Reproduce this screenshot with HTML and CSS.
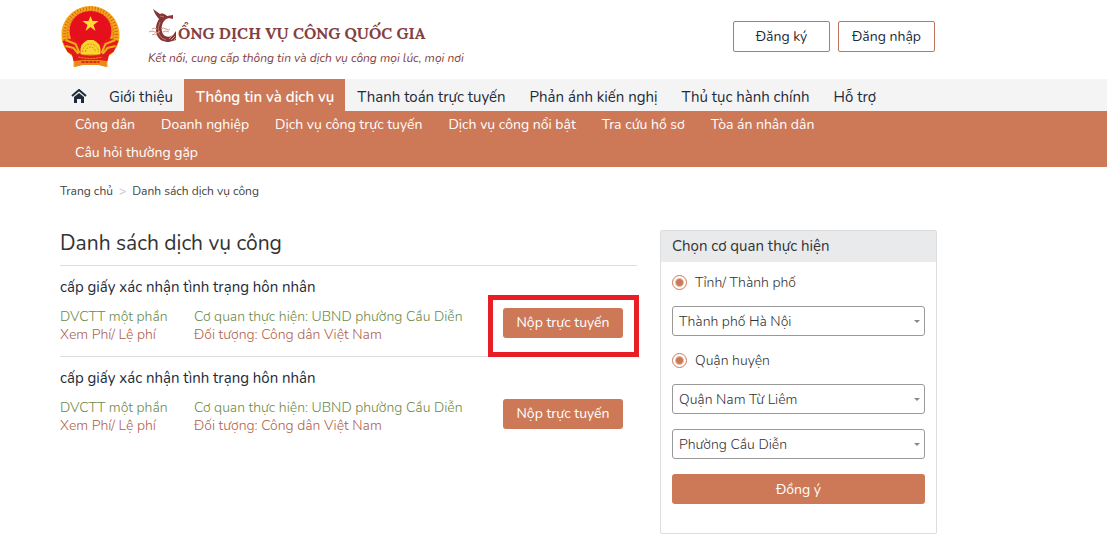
FILE: index.html
```html
<!DOCTYPE html>
<html lang="vi">
<head>
  <meta charset="UTF-8">
  <meta name="viewport" content="width=device-width, initial-scale=1.0">
  <title>Cổng Dịch vụ công Quốc gia</title>
  <link rel="stylesheet" href="styles.css">
</head>
<body>
  <header class="header wrap">
    <a class="brand" href="#" aria-label="Trang chủ">
      <svg class="emblem" viewBox="0 0 60 62" aria-hidden="true">
        <path d="M30 0C45 0 59 12 59 29c0 8-3 14-8 19l-4 3v10l-8-2H21l-8 2V51l-4-3C4 43 1 37 1 29 1 12 15 0 30 0z" fill="#f3a91c"/>
        <circle cx="30" cy="28" r="26" fill="none" stroke="#dd6016" stroke-width="3" stroke-dasharray="1 2"/>
        <circle cx="30" cy="28" r="23" fill="none" stroke="#e67d18" stroke-width="2" stroke-dasharray="2 1"/>
        <ellipse cx="30" cy="25" rx="21" ry="20" fill="#e6101c"/>
        <path d="M30 10l2 5h6l-5 4 2 6-5-4-5 4 2-6-5-4h6z" fill="#ffdf32"/>
        <path d="M2 35l10-3 8 6 3 10-9 2-7-4zM58 35l-10-3-8 6-3 10 9 2 7-4z" fill="#e31b1c"/>
        <path d="M5 34l10 4 4 9M5 40l8 2 5 6M55 34l-10 4-4 9M55 40l-8 2-5 6" fill="none" stroke="#f3a91c" stroke-width="2"/>
        <path d="M20 48v-5l1-4 3-3 3-2h6l3 2 3 3 1 4v5z" fill="#f9d52d"/>
        <path d="M22 46a8 8 0 0 1 16 0M25 46a5 5 0 0 1 10 0" fill="none" stroke="#e78a18" stroke-width="1" stroke-dasharray="2 1"/>
        <path d="M11 47q19 5 38 0l-2 8q-17 4-34 0z" fill="#e01a1d"/>
        <path d="M18 51q12 3 24 0" fill="none" stroke="#f3a423" stroke-width="1" stroke-dasharray="2 1"/>
        <path d="M14 55l7-1h18l7 1v6l-8-2H22l-8 2z" fill="#ef8618"/>
        <path d="M21 56h18" stroke="#d7291b" stroke-width="2" stroke-dasharray="3 1"/>
      </svg>
      <span class="brand-text">
        <span class="brand-name">
          <svg class="bird" viewBox="0 0 30 34" aria-hidden="true">
            <path d="M5 0l7 5c3-1 5 0 7 2l6-1v4c-3-1-6-1-8 1-4 4-4 10-2 14 2 3 6 4 10 1l3-4v9l-7 2c-6 0-10-2-12-7-2-6-1-11 2-16-2-2-4-5-6-10z" fill="#863536"/>
            <path d="M12 7l4 1M12 13q-3 6-1 12 2 5 7 6" fill="none" stroke="#b97868" stroke-width="1"/>
            <path d="M21 30l5-5M23 31l4-4M26 31l2-2" fill="none" stroke="#d2a090" stroke-width="1"/>
            <path d="M4 20q2-2 5 0M1 23q3-2 6 0t5-1M4 26q3-2 5 0M13 20q2-2 5 0t4 0M15 23q2-2 6 0" fill="none" stroke="#d39a88" stroke-width="1"/>
          </svg>
          <span>ỔNG DỊCH VỤ CÔNG QUỐC GIA</span>
        </span>
        <span class="brand-slogan">Kết nối, cung cấp thông tin và dịch vụ công mọi lúc, mọi nơi</span>
      </span>
    </a>
    <div class="account">
      <button class="btn-outline" type="button">Đăng ký</button>
      <button class="btn-outline" type="button">Đăng nhập</button>
    </div>
  </header>

  <nav class="nav">
    <div class="wrap nav-list">
      <a class="home" href="#" aria-label="Trang chủ">
        <svg class="home-icon" viewBox="0 0 16 14" aria-hidden="true">
          <path d="M1 7l7-6 7 6" fill="none" stroke="#1d2b3a" stroke-width="2"/>
          <path d="M3 8l5-4 5 4v6h-3v-4H6v4H3z" fill="#1d2b3a"/>
        </svg>
      </a>
      <a href="#">Giới thiệu</a>
      <a class="active" href="#">Thông tin và dịch vụ</a>
      <a href="#">Thanh toán trực tuyến</a>
      <a href="#">Phản ánh kiến nghị</a>
      <a href="#">Thủ tục hành chính</a>
      <a href="#">Hỗ trợ</a>
    </div>
  </nav>
  <nav class="subnav">
    <div class="wrap">
      <div class="subnav-list">
        <a href="#">Công dân</a>
        <a href="#">Doanh nghiệp</a>
        <a href="#">Dịch vụ công trực tuyến</a>
        <a href="#">Dịch vụ công nổi bật</a>
        <a href="#">Tra cứu hồ sơ</a>
        <a href="#">Tòa án nhân dân</a>
        <a href="#">Câu hỏi thường gặp</a>
      </div>
    </div>
  </nav>

  <div class="wrap breadcrumb">
    <a href="#">Trang chủ</a>
    <span class="sep">&gt;</span>
    <a href="#">Danh sách dịch vụ công</a>
  </div>

  <div class="wrap content">
    <main>
      <h1>Danh sách dịch vụ công</h1>
      <article class="service">
        <h2>cấp giấy xác nhận tình trạng hôn nhân</h2>
        <div class="service-row">
          <div class="service-type">
            <div class="green">DVCTT một phần</div>
            <a class="brown" href="#">Xem Phí/ Lệ phí</a>
          </div>
          <div class="service-info">
            <div class="green">Cơ quan thực hiện: UBND phường Cầu Diễn</div>
            <div class="brown">Đối tượng: Công dân Việt Nam</div>
          </div>
          <div class="service-action">
            <button class="btn" type="button">Nộp trực tuyến</button>
            <span class="marker"></span>
          </div>
        </div>
      </article>
      <article class="service">
        <h2>cấp giấy xác nhận tình trạng hôn nhân</h2>
        <div class="service-row">
          <div class="service-type">
            <div class="green">DVCTT một phần</div>
            <a class="brown" href="#">Xem Phí/ Lệ phí</a>
          </div>
          <div class="service-info">
            <div class="green">Cơ quan thực hiện: UBND phường Cầu Diễn</div>
            <div class="brown">Đối tượng: Công dân Việt Nam</div>
          </div>
          <div class="service-action">
            <button class="btn" type="button">Nộp trực tuyến</button>
          </div>
        </div>
      </article>
    </main>

    <aside class="panel">
      <h3>Chọn cơ quan thực hiện</h3>
      <form class="panel-body">
        <label class="radio"><input type="radio" name="province" checked> Tỉnh/ Thành phố</label>
        <select aria-label="Tỉnh/ Thành phố">
          <option>Thành phố Hà Nội</option>
        </select>
        <label class="radio"><input type="radio" name="district" checked> Quận huyện</label>
        <select aria-label="Quận huyện">
          <option>Quận Nam Từ Liêm</option>
        </select>
        <select aria-label="Phường xã">
          <option>Phường Cầu Diễn</option>
        </select>
        <button class="btn" type="button">Đồng ý</button>
      </form>
    </aside>
  </div>
</body>
</html>
```
FILE: styles.css
```css
* {
  box-sizing: border-box;
}

body {
  margin: 0;
  background: #fff;
  color: #1d2b3a;
  font-family: Nunito, Lato, Roboto, sans-serif;
  font-size: 14px;
}

a {
  color: inherit;
  text-decoration: none;
}

button, select, input {
  font: inherit;
  color: inherit;
}

.wrap {
  padding: 0 170px 0 60px;
}

/* header */
.header {
  display: flex;
  justify-content: space-between;
  align-items: flex-start;
  height: 79px;
}

.brand {
  display: flex;
  gap: 27px;
  padding-top: 6px;
}

.emblem {
  width: 61px;
  height: 62px;
}

.brand-text {
  display: flex;
  flex-direction: column;
  color: #863f3f;
  white-space: nowrap;
}

.brand-name {
  display: flex;
  align-items: flex-end;
  height: 40px;
  font-family: Lora, "Liberation Serif", serif;
  font-size: 16px;
  font-weight: bold;
  line-height: 26px;
}

.bird {
  width: 30px;
  height: 40px;
}

.brand-slogan {
  font-size: 12px;
  font-style: italic;
  line-height: 24px;
}

.account {
  display: flex;
  gap: 8px;
  padding: 21px 2px 0 0;
}

.btn-outline {
  width: 97px;
  height: 31px;
  padding: 0;
  border: 1px solid #bf7562;
  border-radius: 2px;
  background: #fff;
}

/* menus */
.nav {
  background: #f4f4f4;
}

.nav-list {
  display: flex;
  line-height: 32px;
  font-size: 15px;
  white-space: nowrap;
}

.nav-list a {
  padding: 2px 11px 0;
  height: 32px;
}

.nav-list .active {
  padding: 2px 11px 0 12px;
  background: #cd7958;
  color: #fff;
  font-weight: 600;
}

.nav-list .active ~ a {
  padding: 2px 12px 0;
}

.home {
  display: flex;
  align-items: center;
}

.home-icon {
  width: 16px;
  height: 14px;
}

.subnav {
  background: #cd7958;
  color: #fff;
}

.subnav-list {
  display: flex;
  flex-wrap: wrap;
  column-gap: 26px;
  padding: 0 15px;
  line-height: 28px;
}

.breadcrumb {
  display: flex;
  gap: 6px;
  padding-top: 14px;
  font-size: 12px;
  line-height: 20px;
  color: #444;
}

.sep {
  color: #bbb;
}

/* content */
.content {
  display: flex;
  gap: 23px;
  align-items: flex-start;
  padding-top: 29px;
}

main {
  flex: 1;
}

h1 {
  margin: 0;
  padding-bottom: 9px;
  border-bottom: 1px solid #ddd;
  color: #333;
  font-size: 21px;
  font-weight: normal;
  line-height: 26px;
}

.service {
  padding: 11px 14px 12px 0;
}

.service + .service {
  border-top: 1px solid #ddd;
}

.service h2 {
  margin: 0;
  padding-bottom: 11px;
  font-size: 15px;
  font-weight: normal;
  line-height: 20px;
}

.service-row {
  display: flex;
  line-height: 18px;
}

.service-type {
  width: 134px;
}

.service-info {
  flex: 1;
}

.green {
  color: #6b8a48;
  font-weight: 300;
}

.brown {
  color: #b0604c;
  font-weight: 300;
}

.service-action {
  position: relative;
  width: 120px;
  height: 30px;
}

.marker {
  position: absolute;
  top: -13px;
  right: -16px;
  bottom: -19px;
  left: -15px;
  border: 5px solid #e91d25;
  pointer-events: none;
}

.btn {
  width: 100%;
  height: 30px;
  padding: 0;
  border: 0;
  border-radius: 3px;
  background: #cd7958;
  color: #fff;
  font-weight: normal;
}

/* agency form */
.panel {
  width: 277px;
  border: 1px solid #ddd;
  border-radius: 2px;
}

.panel h3 {
  margin: 0;
  padding: 0 11px;
  background: #e9eaeb;
  color: #333;
  font-size: 15px;
  font-weight: normal;
  line-height: 31px;
}

.panel-body {
  padding: 11px 11px 29px;
  color: #333;
  font-weight: 300;
}

.radio {
  display: flex;
  align-items: center;
  gap: 8px;
  height: 18px;
  margin-bottom: 15px;
}

.radio input {
  appearance: none;
  width: 15px;
  height: 15px;
  margin: 0;
  border: 1px solid #cd7958;
  border-radius: 50%;
  background: radial-gradient(circle, #cd7958 3px, #fff 5px);
}

.panel select {
  display: block;
  width: 100%;
  height: 30px;
  margin-bottom: 15px;
  padding: 0 6px;
  border: 1px solid #999;
  border-radius: 3px;
  appearance: none;
  background: #fff url("data:image/svg+xml,%3Csvg xmlns='http://www.w3.org/2000/svg' viewBox='0 0 6 3'%3E%3Cpath d='M0 0h6L3 3z' fill='%23888'/%3E%3C/svg%3E") no-repeat right 4px center / 6px 3px;
}
```
